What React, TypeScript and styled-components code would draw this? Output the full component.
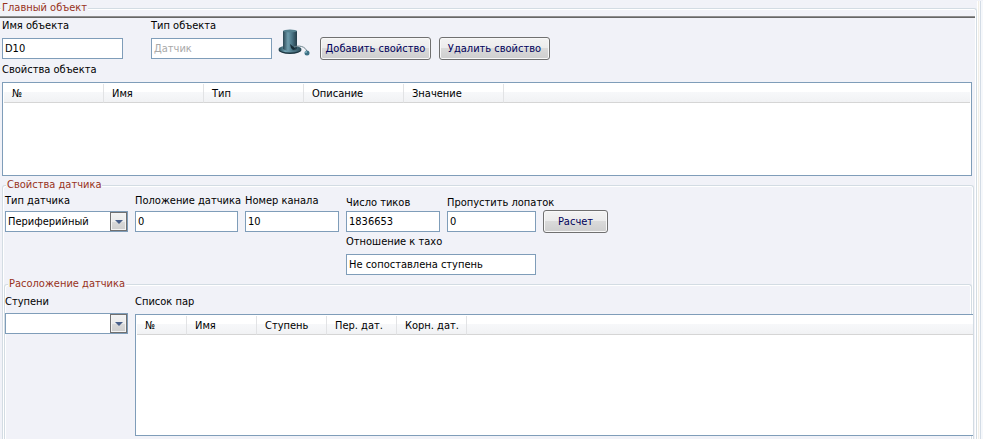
import React from "react";
import styled, { createGlobalStyle } from "styled-components";

const GlobalStyle = createGlobalStyle`
  * { box-sizing: border-box; }
  body {
    margin: 0;
    background: #f1f2f8;
    color: #000;
    font: 11px/14px "DejaVu Sans Condensed", "DejaVu Sans", sans-serif;
  }
  input, select, button { font: inherit; color: inherit; }
`;

const Page = styled.main`
  display: flex;
  height: 100vh;
  padding-top: 1px;
  overflow: hidden;
`;

const Group = styled.fieldset`
  min-width: 0;
  margin: 0;
  padding: 0;
  border: 1px solid #d3dce3;
  border-bottom: 0;
  border-radius: 3px 3px 0 0;
  box-shadow: inset 1px 1px 0 #fff, inset -1px 0 0 #fff;
`;

const MainGroup = styled(Group)`
  flex: 1;
  border-left: 0;
  border-top-left-radius: 0;
  box-shadow: inset 0 1px 0 #fff, inset -1px 0 0 #fff;
`;

const SensorGroup = styled(Group)`
  min-height: 100vh;
  margin: 2px 2px 0;
  padding: 2px 0 0;
`;

const PlacementGroup = styled(Group)`
  min-height: 100vh;
  margin: 2px 1px 0;
  padding: 4px 0 0;
`;

const Legend = styled.legend`
  margin-left: 1px;
  padding: 0 1px;
  background: #f1f2f8;
  color: #98321c;
`;

const InsetLegend = styled(Legend)`
  margin-left: 3px;
`;

const Rule = styled.hr`
  height: 2px;
  margin: 1px 1px 1px 0;
  border: 0;
  border-top: 1px solid #8e8e8e;
  background: #666;
`;

const Toolbar = styled.div`
  display: flex;
  align-items: flex-start;
  min-height: 41px;
  padding-left: 2px;
`;

const ToolbarActions = styled.div`
  display: flex;
  align-self: flex-end;
  gap: 8px;
  margin-left: 10px;
`;

const Field = styled.div<{ $gap?: number; $width?: number }>`
  display: flex;
  flex-direction: column;
  gap: ${(p) => p.$gap ?? 3}px;
  width: ${(p) => (p.$width ? `${p.$width}px` : "auto")};
`;

const NameField = styled(Field)`
  margin-right: 28px;
`;

const TickField = styled(Field)`
  padding-top: 2px;
`;

const RatioField = styled(Field)`
  grid-column: 4 / span 2;
`;

const Label = styled.label`
  white-space: nowrap;
`;

const TextInput = styled.input`
  width: 100%;
  height: 21px;
  padding: 0 2px;
  border: 1px solid #7f9db9;
  border-radius: 0;
  background: #fff;
  &:disabled { color: #a9a9a9; }
`;

const PushButton = styled.button<{ $width: number }>`
  width: ${(p) => p.$width}px;
  height: 23px;
  padding: 0;
  border: 1px solid #707070;
  border-radius: 3px;
  background: linear-gradient(#f3f3f3 0, #ebebeb 50%, #dadada 50%, #cecece 100%);
  box-shadow: inset 0 0 0 1px #f8f8f8;
  color: #00005a;
  white-space: nowrap;
`;

const CalcButton = styled(PushButton)`
  align-self: end;
`;

const HatIcon = styled.svg`
  width: 32px;
  height: 32px;
  margin: 8px 0 0 6px;
`;

const ComboBox = styled.div`
  position: relative;
  height: 21px;
`;

const ComboSelect = styled.select`
  width: 100%;
  height: 100%;
  padding: 0 20px 0 2px;
  border: 1px solid #7f9db9;
  border-radius: 0;
  background: #fff;
  appearance: none;
`;

const ComboArrow = styled.span`
  position: absolute;
  top: 1px;
  right: 1px;
  display: grid;
  place-items: center;
  width: 17px;
  height: 19px;
  border: 1px solid #707070;
  background: linear-gradient(#f3f3f3 0, #ebebeb 50%, #dadada 50%, #cecece 100%);
  box-shadow: inset 0 0 0 1px #f4f4f4;
  pointer-events: none;
`;

const SensorFields = styled.div`
  display: grid;
  grid-template-columns: 123px 103px 94px 94px 89px 65px;
  grid-template-rows: 39px auto;
  gap: 2px 7px;
  padding-left: 2px;
`;

const PlacementFields = styled.div`
  display: grid;
  grid-template-columns: 123px minmax(0, 1fr);
  gap: 7px;
  margin-right: -2px;
`;

const PropertiesSection = styled.section`
  display: flex;
  flex-direction: column;
  gap: 5px;
  padding: 3px 4px 0 2px;
`;

const PairsSection = styled.section`
  display: flex;
  flex-direction: column;
  gap: 5px;
`;

const Caption = styled.div``;

const ListFrame = styled.div<{ $height: number; $open?: boolean }>`
  min-height: ${(p) => p.$height}px;
  padding: 1px;
  padding-right: ${(p) => (p.$open ? 0 : 1)}px;
  border: 1px solid #7f9db9;
  border-right-width: ${(p) => (p.$open ? 0 : 1)}px;
  background: #fff;
`;

const ListTable = styled.table`
  width: 100%;
  table-layout: fixed;
  border-spacing: 0;
`;

const HeadCell = styled.th<{ $width?: number }>`
  width: ${(p) => (p.$width ? `${p.$width}px` : "auto")};
  height: 19px;
  padding: 2px 0 0 8px;
  border-right: ${(p) => (p.$width ? "1px solid #e2e3e5" : "0")};
  border-bottom: 1px solid #d5d5d5;
  background: linear-gradient(#fff 0, #fff 45%, #f7f8fa 45%, #f1f2f4 100%);
  font-weight: normal;
  text-align: left;
  white-space: nowrap;
`;

const EdgeStripes = styled.div`
  flex: none;
  width: 6px;
  background: linear-gradient(
    to right,
    #fff 0 1px,
    #f1eee6 1px 2px,
    #fafafa 2px 3px,
    #d3dce6 3px 4px,
    #f6f8fb 4px 6px
  );
`;

type Column = { title: string; width: number };

const propertyColumns: Column[] = [
  { title: "№", width: 100 },
  { title: "Имя", width: 100 },
  { title: "Тип", width: 100 },
  { title: "Описание", width: 100 },
  { title: "Значение", width: 100 },
];

const pairColumns: Column[] = [
  { title: "№", width: 50 },
  { title: "Имя", width: 70 },
  { title: "Ступень", width: 70 },
  { title: "Пер. дат.", width: 70 },
  { title: "Корн. дат.", width: 70 },
];

function ListView(props: { columns: Column[]; height: number; labelledBy: string; open?: boolean }) {
  return (
    <ListFrame $height={props.height} $open={props.open}>
      <ListTable aria-labelledby={props.labelledBy}>
        <thead>
          <tr>
            {props.columns.map((c) => (
              <HeadCell key={c.title} $width={c.width} scope="col">
                {c.title}
              </HeadCell>
            ))}
            <HeadCell as="td" />
          </tr>
        </thead>
      </ListTable>
    </ListFrame>
  );
}

function Combo(props: { id: string; options: string[] }) {
  return (
    <ComboBox>
      <ComboSelect id={props.id}>
        {props.options.map((o) => (
          <option key={o}>{o}</option>
        ))}
      </ComboSelect>
      <ComboArrow>
        <svg width="8" height="4" viewBox="0 0 8 4" aria-hidden="true">
          <path d="M0 0h8L4 4z" fill="#49608a" />
        </svg>
      </ComboArrow>
    </ComboBox>
  );
}

function Hat() {
  return (
    <HatIcon viewBox="0 0 32 32" aria-hidden="true">
      <defs>
        <linearGradient id="crown" x1="0" x2="1">
          <stop offset="0" stopColor="#2b4653" />
          <stop offset="0.35" stopColor="#6f9dad" />
          <stop offset="0.65" stopColor="#4a7485" />
          <stop offset="1" stopColor="#233c48" />
        </linearGradient>
        <linearGradient id="brim" x1="0" x2="1">
          <stop offset="0" stopColor="#20434f" />
          <stop offset="0.3" stopColor="#74a5b5" />
          <stop offset="1" stopColor="#2a4b59" />
        </linearGradient>
      </defs>
      <ellipse cx="12" cy="23" rx="11.5" ry="4" fill="#1c3641" />
      <ellipse cx="12" cy="22" rx="11.5" ry="3.5" fill="url(#brim)" />
      <path d="M5 4v18c3 2.500 11 2.500 14 0V4z" fill="url(#crown)" />
      <ellipse cx="12" cy="4" rx="7" ry="1.500" fill="#55818f" />
      <path d="M12 17l6 5-3 1-2-2z" fill="#172c36" />
      <path d="M16 20c4-2 12-1 13 5" fill="none" stroke="#6e868f" />
      <circle cx="29" cy="26" r="2.500" fill="#3d7185" />
      <circle cx="28" cy="25" r="1" fill="#86b5c2" />
    </HatIcon>
  );
}

export default function App() {
  return (
    <>
      <GlobalStyle />
      <Page>
        <MainGroup>
          <Legend>Главный объект</Legend>
          <Rule />
          <Toolbar>
            <NameField $gap={5} $width={121}>
              <Label htmlFor="name">Имя объекта</Label>
              <TextInput id="name" defaultValue="D10" />
            </NameField>
            <Field $gap={5} $width={121}>
              <Label htmlFor="kind">Тип объекта</Label>
              <TextInput id="kind" defaultValue="Датчик" disabled />
            </Field>
            <Hat />
            <ToolbarActions>
              <PushButton type="button" $width={111}>Добавить свойство</PushButton>
              <PushButton type="button" $width={111}>Удалить свойство</PushButton>
            </ToolbarActions>
          </Toolbar>
          <PropertiesSection>
            <Caption id="properties">Свойства объекта</Caption>
            <ListView columns={propertyColumns} height={94} labelledBy="properties" />
          </PropertiesSection>
          <SensorGroup>
            <InsetLegend>Свойства датчика</InsetLegend>
            <SensorFields>
              <Field>
                <Label htmlFor="sensorType">Тип датчика</Label>
                <Combo id="sensorType" options={["Периферийный"]} />
              </Field>
              <Field>
                <Label htmlFor="position">Положение датчика</Label>
                <TextInput id="position" defaultValue="0" />
              </Field>
              <Field>
                <Label htmlFor="channel">Номер канала</Label>
                <TextInput id="channel" defaultValue="10" />
              </Field>
              <TickField $gap={1}>
                <Label htmlFor="ticks">Число тиков</Label>
                <TextInput id="ticks" defaultValue="1836653" />
              </TickField>
              <TickField $gap={1}>
                <Label htmlFor="skip">Пропустить лопаток</Label>
                <TextInput id="skip" defaultValue="0" />
              </TickField>
              <CalcButton type="button" $width={65}>Расчет</CalcButton>
              <RatioField $gap={5}>
                <Label htmlFor="ratio">Отношение к тахо</Label>
                <TextInput id="ratio" defaultValue="Не сопоставлена ступень" />
              </RatioField>
            </SensorFields>
            <PlacementGroup>
              <InsetLegend>Расоложение датчика</InsetLegend>
              <PlacementFields>
                <Field $gap={4}>
                  <Label htmlFor="stage">Ступени</Label>
                  <Combo id="stage" options={[""]} />
                </Field>
                <PairsSection>
                  <Caption id="pairs">Список пар</Caption>
                  <ListView columns={pairColumns} height={122} labelledBy="pairs" open />
                </PairsSection>
              </PlacementFields>
            </PlacementGroup>
          </SensorGroup>
        </MainGroup>
        <EdgeStripes />
      </Page>
    </>
  );
}
